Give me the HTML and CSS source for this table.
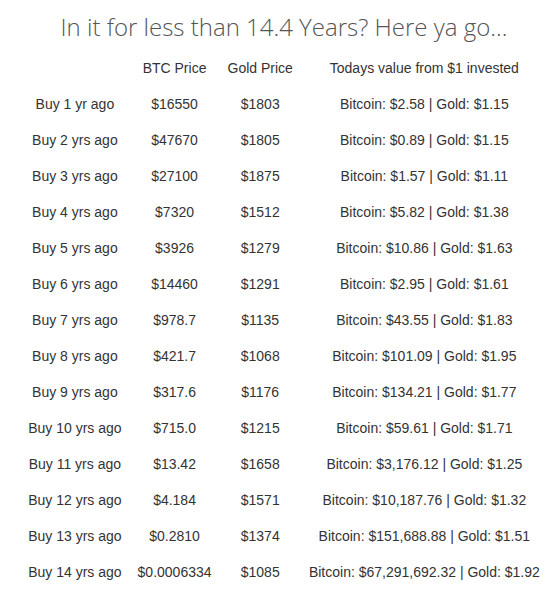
FILE: index.html
```html
<!DOCTYPE html>
<html>
<head>
<meta charset="utf-8">
<link rel="stylesheet" href="styles.css">
</head>
<body>
<div class="wrap">
  <h1 class="title">In it for less than 14.4 Years? Here ya go...</h1>
  <table class="returns">
    <thead>
      <tr><th></th><th>BTC Price</th><th>Gold Price</th><th>Todays value from $1 invested</th></tr>
    </thead>
    <tbody>
      <tr><td>Buy 1 yr ago</td><td>$16550</td><td>$1803</td><td>Bitcoin: $2.58 | Gold: $1.15</td></tr>
      <tr><td>Buy 2 yrs ago</td><td>$47670</td><td>$1805</td><td>Bitcoin: $0.89 | Gold: $1.15</td></tr>
      <tr><td>Buy 3 yrs ago</td><td>$27100</td><td>$1875</td><td>Bitcoin: $1.57 | Gold: $1.11</td></tr>
      <tr><td>Buy 4 yrs ago</td><td>$7320</td><td>$1512</td><td>Bitcoin: $5.82 | Gold: $1.38</td></tr>
      <tr><td>Buy 5 yrs ago</td><td>$3926</td><td>$1279</td><td>Bitcoin: $10.86 | Gold: $1.63</td></tr>
      <tr><td>Buy 6 yrs ago</td><td>$14460</td><td>$1291</td><td>Bitcoin: $2.95 | Gold: $1.61</td></tr>
      <tr><td>Buy 7 yrs ago</td><td>$978.7</td><td>$1135</td><td>Bitcoin: $43.55 | Gold: $1.83</td></tr>
      <tr><td>Buy 8 yrs ago</td><td>$421.7</td><td>$1068</td><td>Bitcoin: $101.09 | Gold: $1.95</td></tr>
      <tr><td>Buy 9 yrs ago</td><td>$317.6</td><td>$1176</td><td>Bitcoin: $134.21 | Gold: $1.77</td></tr>
      <tr><td>Buy 10 yrs ago</td><td>$715.0</td><td>$1215</td><td>Bitcoin: $59.61 | Gold: $1.71</td></tr>
      <tr><td>Buy 11 yrs ago</td><td>$13.42</td><td>$1658</td><td>Bitcoin: $3,176.12 | Gold: $1.25</td></tr>
      <tr><td>Buy 12 yrs ago</td><td>$4.184</td><td>$1571</td><td>Bitcoin: $10,187.76 | Gold: $1.32</td></tr>
      <tr><td>Buy 13 yrs ago</td><td>$0.2810</td><td>$1374</td><td>Bitcoin: $151,688.88 | Gold: $1.51</td></tr>
      <tr><td>Buy 14 yrs ago</td><td>$0.0006334</td><td>$1085</td><td>Bitcoin: $67,291,692.32 | Gold: $1.92</td></tr>
    </tbody>
  </table>
</div>
</body>
</html>
```
FILE: styles.css
```css
html, body {
  margin: 0;
  padding: 0;
  background: #ffffff;
}
.wrap {
  width: 528px;
  margin-left: 20px;
  padding-top: 9px;
}
.title {
  font-family: "Open Sans", sans-serif;
  font-weight: 300;
  font-size: 24px;
  line-height: 36px;
  color: #555555;
  text-align: center;
  margin: 0 0 5px 0;
}
.returns {
  border-collapse: collapse;
  margin: 0 auto;
  font-family: "Liberation Sans", Arial, sans-serif;
  font-size: 14px;
  color: #333333;
}
.returns th,
.returns td {
  font-weight: normal;
  text-align: center;
  padding: 10px 8px;
  line-height: 16px;
  white-space: nowrap;
}
```
